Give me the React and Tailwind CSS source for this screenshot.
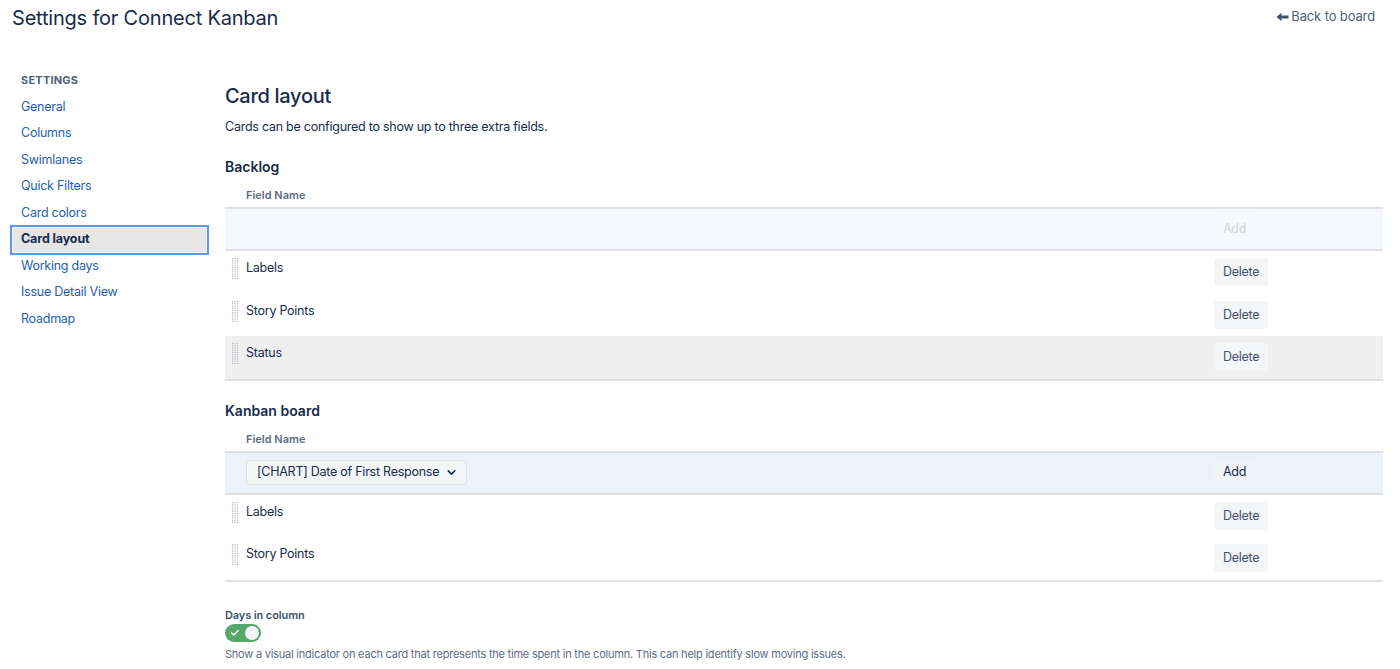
import { ChevronDown, Check } from 'lucide-react';

const navItems = [
    'General',
    'Columns',
    'Swimlanes',
    'Quick Filters',
    'Card colors',
    'Card layout',
    'Working days',
    'Issue Detail View',
    'Roadmap',
];

function DragHandle() {
    const dots = [];
    for (let r = 0; r < 10; r++) {
        for (let c = 0; c < 3; c++) {
            dots.push(<rect key={`${r}-${c}`} x={c * 2.5} y={r * 2.2} width="1.2" height="1.2" fill="#b3bac5" />);
        }
    }
    return (
        <svg width="7" height="22" viewBox="0 0 7 22" className="shrink-0">
            {dots}
        </svg>
    );
}

function FieldRow({ name, grey }) {
    return (
        <div className={`flex h-[42.5px] items-start pt-[7px] ${grey ? 'bg-[#efefef]' : ''}`}>
            <div className="flex flex-1 items-start pl-[7px]">
                <DragHandle />
                <span className="ml-[7px] text-[12.5px] leading-[20px] tracking-[-0.02em] text-[#172b4d]">{name}</span>
            </div>
            <div className="w-[169px]">
                <button className="h-[28px] rounded-[3px] bg-[#f4f5f7] px-[9px] text-[12.5px] tracking-[-0.02em] text-[#42526e]">Delete</button>
            </div>
        </div>
    );
}

function FieldTable({ title, rows, addRow }) {
    return (
        <div>
            <h3 className="text-[14px] font-semibold leading-[20px] text-[#172b4d]">{title}</h3>
            <div className="mt-[10px] border-b-2 border-[#dfe1e6] pb-[4px] pl-[21px] text-[11px] font-semibold leading-[16px] text-[#5e6c84]">
                Field Name
            </div>
            {addRow}
            <div className="border-b-2 border-[#dfe1e6]">
                {rows.map((r) => (
                    <FieldRow key={r.name} name={r.name} grey={r.grey} />
                ))}
            </div>
        </div>
    );
}

export default function App() {
    return (
        <div className="min-h-[669px] bg-white font-['Inter',sans-serif] text-[#172b4d]">
            <div className="flex h-[36px] items-center justify-between pl-[12px] pr-[25px]">
                <h1 className="text-[20px] font-normal leading-[24px] tracking-[-0.01em] text-[#172b4d]">Settings for Connect Kanban</h1>
                <a className="-mt-[2px] flex items-center text-[13px] tracking-[-0.01em] text-[#505f79]">
                    <svg width="13" height="10" viewBox="0 0 13 10" className="mr-[2px]">
                        <path d="M0.5 5 L5.5 0.8 V3.6 H12.5 V6.4 H5.5 V9.2 Z" fill="#42526e" />
                    </svg>
                    Back to board
                </a>
            </div>

            <div className="flex">
                <nav className="w-[225px] shrink-0 pl-[10px] pr-[16px] pt-[36px]">
                    <div className="pl-[11px] text-[11px] font-bold uppercase leading-[16px] tracking-[0.02em] text-[#505f79]">Settings</div>
                    <ul className="mt-[6px]">
                        {navItems.map((item) =>
                            item === 'Card layout' ? (
                                <li
                                    key={item}
                                    className="-my-[2px] flex h-[30.5px] items-center border-2 border-[#5a98f0] bg-[#e6e6e6] pl-[9px] text-[12.5px] font-bold tracking-[-0.01em] text-[#172b4d] shadow-[inset_0_0_0_1px_#f4f4f4]"
                                >
                                    {item}
                                </li>
                            ) : (
                                <li key={item} className="flex h-[26.5px] items-center pl-[11px] text-[12.5px] tracking-[-0.02em] text-[#1f5eb0]">
                                    {item}
                                </li>
                            )
                        )}
                    </ul>
                </nav>

                <main className="flex-1 pr-[17px] pt-[48px]">
                    <h2 className="text-[20px] font-medium leading-[24px] tracking-[-0.015em] text-[#172b4d]">Card layout</h2>
                    <p className="mt-[9px] text-[12.5px] leading-[20px] tracking-[-0.02em] text-[#172b4d]">Cards can be configured to show up to three extra fields.</p>

                    <div className="mt-[20px]">
                        <FieldTable
                            title="Backlog"
                            addRow={
                                <div className="flex h-[42px] items-center border-b-2 border-[#dfe1e6] bg-[#f5f8fc]">
                                    <div className="flex-1" />
                                    <div className="w-[169px]">
                                        <button className="h-[28px] rounded-[3px] bg-[#f7f9fc] px-[9px] text-[12.5px] tracking-[-0.02em] text-[#d0d5dd]">Add</button>
                                    </div>
                                </div>
                            }
                            rows={[{ name: 'Labels' }, { name: 'Story Points' }, { name: 'Status', grey: true }]}
                        />
                    </div>

                    <div className="mt-[20px]">
                        <FieldTable
                            title="Kanban board"
                            addRow={
                                <div className="flex h-[42px] items-center border-b-2 border-[#dfe1e6] bg-[#ecf1fa]">
                                    <div className="flex-1 pl-[21px]">
                                        <div className="flex h-[25px] w-[221px] items-center justify-between whitespace-nowrap rounded-[4px] border border-[#dfe1e6] bg-[#f4f5f7] pl-[10px] pr-[8px] text-[12.5px] tracking-[-0.02em] text-[#172b4d]">
                                            [CHART] Date of First Response
                                            <ChevronDown size={13} strokeWidth={3} className="text-[#172b4d]" />
                                        </div>
                                    </div>
                                    <div className="w-[169px]">
                                        <button className="h-[28px] rounded-[3px] bg-[#f0f3f8] px-[9px] text-[12.5px] tracking-[-0.02em] text-[#172b4d]">Add</button>
                                    </div>
                                </div>
                            }
                            rows={[{ name: 'Labels' }, { name: 'Story Points' }]}
                        />
                    </div>

                    <div className="mt-[25px]">
                        <div className="text-[11px] font-semibold leading-[16px] tracking-[-0.01em] text-[#42526e]">Days in column</div>
                        <div className="mt-[1px] flex h-[18px] w-[36px] items-center justify-between rounded-full bg-[#57a86a] pl-[5px] pr-[2px]">
                            <Check size={10} strokeWidth={3.5} className="text-white" />
                            <span className="h-[14px] w-[14px] rounded-full bg-[#f4f5f7]" />
                        </div>
                        <p className="mt-[4px] text-[11px] leading-[16px] tracking-[-0.02em] text-[#5e6c84]">
                            Show a visual indicator on each card that represents the time spent in the column. This can help identify slow moving issues.
                        </p>
                    </div>
                </main>
            </div>
        </div>
    );
}
